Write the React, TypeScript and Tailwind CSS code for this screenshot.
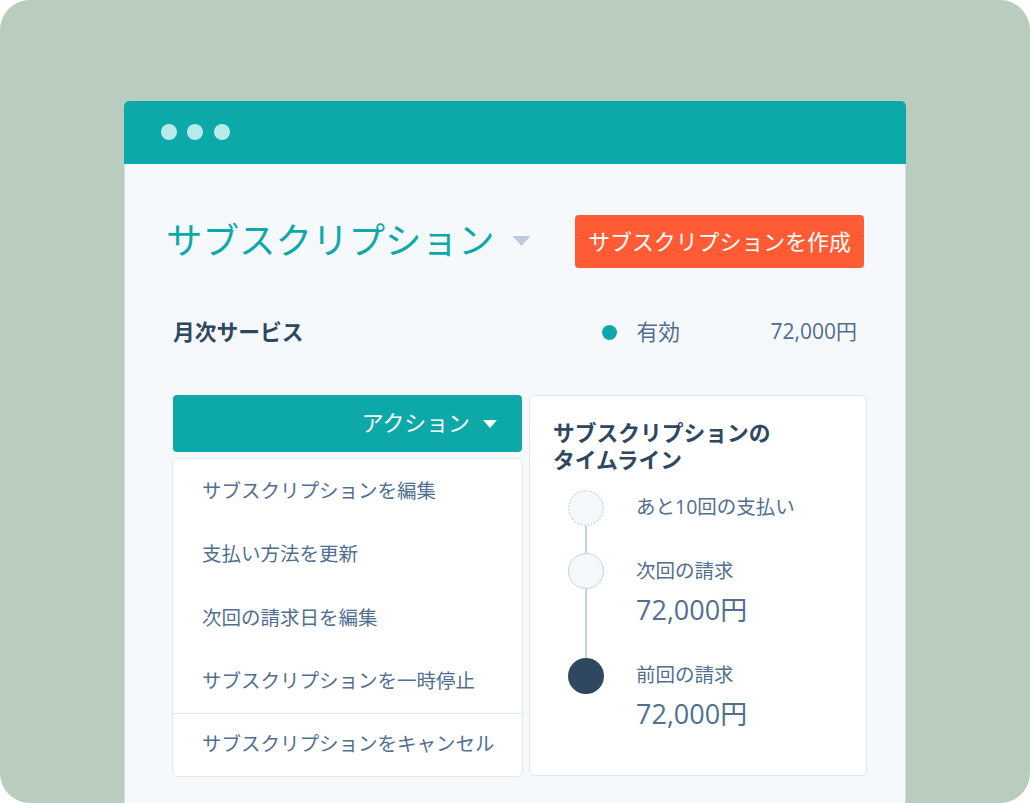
const FONT = "font-['Open_Sans','Noto_Sans_CJK_JP',sans-serif]";

function Caret({ className }: { className: string }) {
  return (
    <svg className={className} viewBox="0 0 18 10" aria-hidden="true">
      <path d="M0 0H18L9 10Z" fill="currentColor" />
    </svg>
  );
}

const menu = [
  "サブスクリプションを編集",
  "支払い方法を更新",
  "次回の請求日を編集",
  "サブスクリプションを一時停止",
];

export default function App() {
  return (
    <div className={`${FONT} h-[803px] w-[1030px] overflow-hidden rounded-[30px] bg-[#b9cdbe] pt-[101px] pl-[124px]`}>
      <div className="h-[702px] w-[782px] overflow-hidden rounded-t-[5px] bg-[#f6f9fc]">
        <div className="flex h-[63px] items-center gap-[10.5px] bg-[#0da9a8] pb-[1px] pl-[36.5px]">
          <span className="h-4 w-4 rounded-full bg-[#b7ebea]" />
          <span className="h-4 w-4 rounded-full bg-[#b7ebea]" />
          <span className="h-4 w-4 rounded-full bg-[#b7ebea]" />
        </div>
        <div className="h-full border-x border-[#d5dde5] pt-[51px] pl-[43px] pr-[38px]">
          <div className="flex h-[53px] items-center justify-between pr-[3px]">
            <div className="flex items-center">
              <h1 className="-mt-[3px] -ml-[2px] text-[36.5px] leading-[50px] font-normal text-[#0da9a8]">サブスクリプション</h1>
              <Caret className="mb-[1px] ml-[17px] h-[10px] w-[19px] text-[#bccadb]" />
            </div>
            <button className="flex h-[53px] w-[289px] items-center justify-center rounded-[4px] bg-[#ff5c35] pt-[1px] text-[21.9px] text-white">
              サブスクリプションを作成
            </button>
          </div>
          <div className="mt-[48px] flex h-[32px] items-center pl-[5px] pr-[10px] text-[21.75px]">
            <span className="font-bold text-[#2f475f]">月次サービス</span>
            <span className="ml-[298px] h-[15px] w-[15px] rounded-full bg-[#0da9a8]" />
            <span className="ml-[20px] text-[#516f90]">有効</span>
            <span className="ml-auto text-[21px] text-[#516f90]">72,000円</span>
          </div>
          <div className="mt-[47px] flex items-start gap-[6px] pl-[4px]">
            <div className="w-[351px]">
              <button className="ml-[1px] flex h-[57px] w-[349px] items-center justify-end rounded-[4px] bg-[#0da9a8] pr-[25px] text-[21.9px] text-white">
                アクション
                <Caret className="ml-[13px] h-[8px] w-[14px] text-white" />
              </button>
              <div className="mt-[6px] h-[319px] rounded-[5px] border border-[#dfe7ef] bg-white">
                <ul className="h-[255px] border-b border-[#dfe7ef] pl-[29px] text-[19.5px] text-[#516f90]">
                  {menu.map((m) => (
                    <li key={m} className="flex h-[63.3px] items-center">{m}</li>
                  ))}
                </ul>
                <div className="flex h-[60px] items-center pl-[29px] text-[19.5px] text-[#516f90]">サブスクリプションをキャンセル</div>
              </div>
            </div>
            <div className="h-[381px] w-[338px] rounded-[5px] border border-[#dfe7ef] bg-white pl-[23px] pt-[23px]">
              <h2 className="text-[21.75px] leading-[27px] font-bold text-[#2f475f]">
                サブスクリプションの
                <br />
                タイムライン
              </h2>
              <div className="mt-[17px] ml-[15px] flex">
                <div className="flex w-[36px] flex-col items-center">
                  <svg className="h-[36px] w-[36px]" viewBox="0 0 36 36" aria-hidden="true">
                    <circle cx="18" cy="18" r="17.25" fill="#f6f9fc" stroke="#bccadb" strokeWidth="1.2" strokeDasharray="1.6 1.8" />
                  </svg>
                  <span className="h-[27px] w-[2px] bg-[#c4d0de]" />
                  <span className="h-[36px] w-[36px] rounded-full border border-[#c4d0de] bg-[#f6f9fc]" />
                  <span className="h-[69px] w-[2px] bg-[#c4d0de]" />
                  <span className="h-[36px] w-[36px] rounded-full bg-[#2f475f]" />
                </div>
                <div className="ml-[32px] text-[#516f90]">
                  <p className="h-[63px] pt-[1px] text-[19.5px] leading-[32px]">あと10回の支払い</p>
                  <p className="pt-[2px] text-[19.5px] leading-[32px]">次回の請求</p>
                  <p className="mt-[3px] h-[69px] text-[27px] leading-[40px]">72,000円</p>
                  <p className="text-[19.5px] leading-[32px]">前回の請求</p>
                  <p className="mt-[3px] text-[27px] leading-[40px]">72,000円</p>
                </div>
              </div>
            </div>
          </div>
        </div>
      </div>
    </div>
  );
}
